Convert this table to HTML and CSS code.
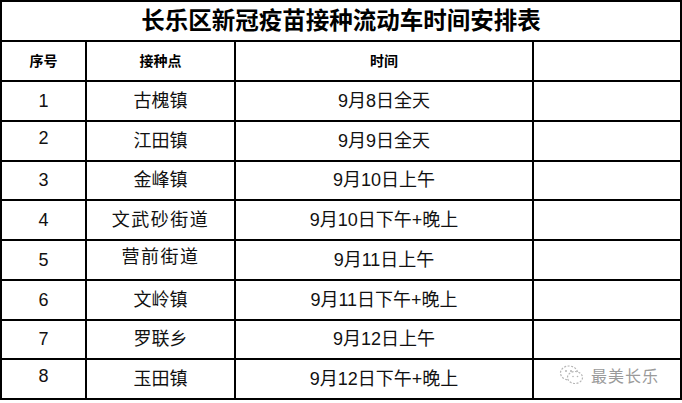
FILE: index.html
```html
<!DOCTYPE html>
<html lang="zh-CN">
<head>
<meta charset="utf-8">
<title>长乐区新冠疫苗接种流动车时间安排表</title>
<link rel="stylesheet" href="styles.css">
</head>
<body>
<div class="sheet">
  <div class="grid">
    <div class="cell title">长乐区新冠疫苗接种流动车时间安排表</div>
    <div class="cell head">序号</div><div class="cell head">接种点</div><div class="cell head">时间</div><div class="cell head"></div>
    <div class="cell">1</div><div class="cell">古槐镇</div><div class="cell">9月8日全天</div><div class="cell"></div>
    <div class="cell up">2</div><div class="cell">江田镇</div><div class="cell">9月9日全天</div><div class="cell"></div>
    <div class="cell">3</div><div class="cell">金峰镇</div><div class="cell">9月10日上午</div><div class="cell"></div>
    <div class="cell">4</div><div class="cell spaced">文武砂街道</div><div class="cell">9月10日下午+晚上</div><div class="cell"></div>
    <div class="cell">5</div><div class="cell spaced up">营前街道</div><div class="cell">9月11日上午</div><div class="cell"></div>
    <div class="cell">6</div><div class="cell">文岭镇</div><div class="cell">9月11日下午+晚上</div><div class="cell"></div>
    <div class="cell">7</div><div class="cell">罗联乡</div><div class="cell">9月12日上午</div><div class="cell"></div>
    <div class="cell up">8</div><div class="cell">玉田镇</div><div class="cell">9月12日下午+晚上</div><div class="cell"></div>
  </div>
  <div class="watermark">
    <svg class="wm-icon" width="26" height="22" viewBox="0 0 26 22">
      <ellipse cx="10" cy="9" rx="8.5" ry="7" fill="none" stroke="#b5b5b5" stroke-width="1.2" stroke-dasharray="2 1.5"/>
      <ellipse cx="16" cy="13.5" rx="7.5" ry="6" fill="#fff" stroke="#b5b5b5" stroke-width="1.2" stroke-dasharray="2 1.5"/>
      <circle cx="7" cy="7" r="1" fill="#b5b5b5"/>
      <circle cx="12" cy="7" r="1" fill="#b5b5b5"/>
      <circle cx="14" cy="12.5" r="0.8" fill="#b5b5b5"/>
      <circle cx="18.5" cy="12.5" r="0.8" fill="#b5b5b5"/>
    </svg>
    <span class="wm-text">最美长乐</span>
  </div>
</div>
</body>
</html>
```
FILE: styles.css
```css
html, body {
  margin: 0;
  padding: 0;
  background: #fff;
}
body {
  width: 682px;
  height: 403px;
  overflow: hidden;
  font-family: "Liberation Sans", "Noto Sans CJK SC", sans-serif;
  color: #111;
}
.sheet {
  position: relative;
  width: 682px;
  height: 403px;
}
.grid {
  display: grid;
  grid-template-columns: 83px 147px 296px 146px;
  grid-template-rows: 38px 38px repeat(8, 37.75px);
  gap: 2px;
  padding: 2px;
  background: #000;
  width: 682px;
  box-sizing: border-box;
}
.cell {
  background: #fff;
  display: flex;
  align-items: center;
  justify-content: center;
  font-size: 18px;
  line-height: 20px;
  white-space: nowrap;
  overflow: hidden;
}
.title {
  grid-column: 1 / 5;
  font-size: 23.5px;
  font-weight: 700;
  color: #000;
}
.head {
  font-size: 14px;
  font-weight: 700;
  color: #000;
}
.spaced {
  letter-spacing: 1.5px;
}
.up {
  padding-bottom: 6px;
}
.watermark {
  position: absolute;
  left: 559px;
  top: 364px;
  display: flex;
  align-items: center;
  gap: 6px;
}
.wm-text {
  font-family: "Noto Sans CJK SC", sans-serif;
  font-size: 16px;
  line-height: 20px;
  color: #9a9a9a;
  letter-spacing: 1px;
}
```
